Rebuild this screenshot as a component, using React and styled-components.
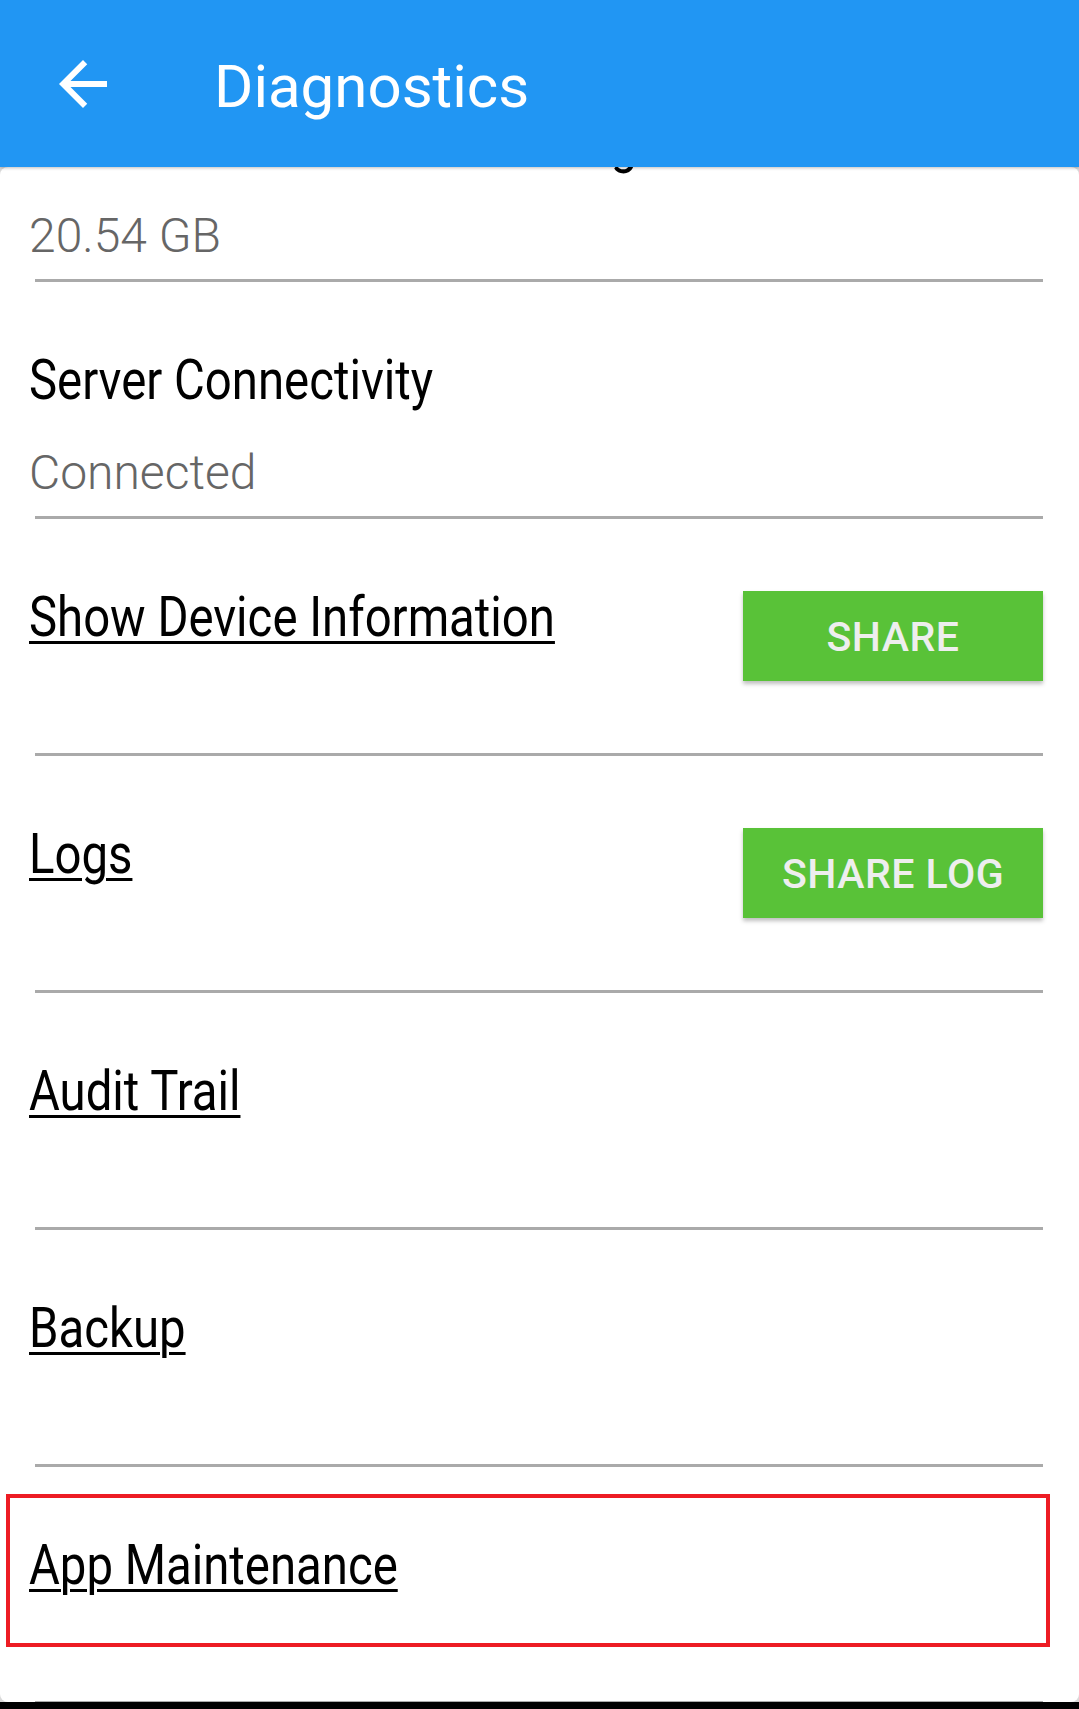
import React from 'react'
import styled, { createGlobalStyle } from 'styled-components'

const GlobalStyle = createGlobalStyle`
  html, body {
    margin: 0;
    padding: 0;
    background: #d9d9d9;
  }
  * { box-sizing: border-box; }
`;

const rows = [
  { label: 'Total Available Device Storage', value: '20.54 GB' },
  { label: 'Server Connectivity', value: 'Connected' },
  { label: 'Show Device Information', link: true, action: 'SHARE' },
  { label: 'Logs', link: true, action: 'SHARE LOG' },
  { label: 'Audit Trail', link: true },
  { label: 'Backup', link: true },
  { label: 'App Maintenance', link: true, highlight: true },
]

function BackArrow() {
  return (
    <svg width="72" height="72" viewBox="0 0 24 24" fill="#fff">
      <path d="M20 11H7.83l5.59-5.59L12 4l-8 8 8 8 1.41-1.41L7.83 13H20v-2z" />
    </svg>
  )
}

function App() {
  return (
    <>
      <GlobalStyle />
      <Pantalla>
        <Encabezado>
          <BotonAtras><BackArrow /></BotonAtras>
          <Titulo>Diagnostics</Titulo>
        </Encabezado>

        <Tarjeta>
          <Lista>
            {rows.map((r) => (
              <React.Fragment key={r.label}>
                <Fila>
                  <Columna>
                    <Etiqueta $link={r.link}>{r.label}</Etiqueta>
                    {r.value && <Valor>{r.value}</Valor>}
                  </Columna>
                  {r.action && <BotonVerde>{r.action}</BotonVerde>}
                  {r.highlight && <Resaltado />}
                </Fila>
                <Separador />
              </React.Fragment>
            ))}
          </Lista>
        </Tarjeta>

        <BarraInferior />
      </Pantalla>
    </>
  )
}

export default App

const Pantalla = styled.div`
  width: 1079px;
  height: 1709px;
  display: flex;
  flex-direction: column;
  overflow: hidden;
  background: #d9d9d9;
`;

const Encabezado = styled.header`
  height: 167px;
  flex-shrink: 0;
  display: flex;
  align-items: center;
  padding-left: 47px;
  background: #2196f3;
  box-shadow: 0 1px 3px rgba(0, 0, 0, 0.25);
  position: relative;
  z-index: 2;
`;

const BotonAtras = styled.div`
  width: 72px;
  height: 72px;
  display: flex;
`;

const Titulo = styled.h1`
  margin: 0 0 0 95px;
  padding-top: 5px;
  font-family: Roboto, "Noto Sans", sans-serif;
  font-weight: 400;
  font-size: 60px;
  color: #fff;
`;

const Tarjeta = styled.main`
  flex: 1;
  background: #fff;
  border-radius: 8px;
  overflow: hidden;
  position: relative;
  z-index: 1;
`;

const Lista = styled.div`
  margin-top: -122px;
  display: flex;
  flex-direction: column;
`;

const Fila = styled.div`
  position: relative;
  height: 234px;
  display: flex;
  justify-content: space-between;
  align-items: flex-start;
  padding: 66px 36px 0 29px;
`;

const Columna = styled.div`
  display: flex;
  flex-direction: column;
`;

const Etiqueta = styled.span`
  display: inline-block;
  align-self: flex-start;
  font-family: Roboto, "Noto Sans", sans-serif;
  font-size: 55px;
  line-height: 64px;
  color: #000;
  white-space: nowrap;
  transform: scaleX(0.86);
  transform-origin: left center;
  text-decoration: ${(p) => (p.$link ? 'underline' : 'none')};
  text-decoration-thickness: 3px;
  text-underline-offset: 5px;
`;

const Valor = styled.span`
  margin-top: 33px;
  font-family: Roboto, "Noto Sans", sans-serif;
  font-weight: 300;
  font-size: 48px;
  line-height: 56px;
  color: #666;
`;

const BotonVerde = styled.button`
  margin-top: 6px;
  width: 300px;
  height: 90px;
  border: none;
  border-radius: 0;
  background: #59c238;
  color: #eeeeee;
  font-family: Roboto, "Noto Sans", sans-serif;
  font-weight: 500;
  font-size: 41px;
  letter-spacing: 0.5px;
  padding-top: 3px;
  box-shadow: 0 3px 4px rgba(0, 0, 0, 0.25);
  cursor: pointer;
`;

const Resaltado = styled.div`
  position: absolute;
  top: 27px;
  left: 6px;
  width: 1044px;
  height: 153px;
  border: 4px solid #ed1c24;
  pointer-events: none;
`;

const Separador = styled.div`
  height: 3px;
  margin: 0 36px 0 35px;
  background: #aaaaaa;
`;

const BarraInferior = styled.div`
  height: 7px;
  flex-shrink: 0;
  background: #000;
`;
